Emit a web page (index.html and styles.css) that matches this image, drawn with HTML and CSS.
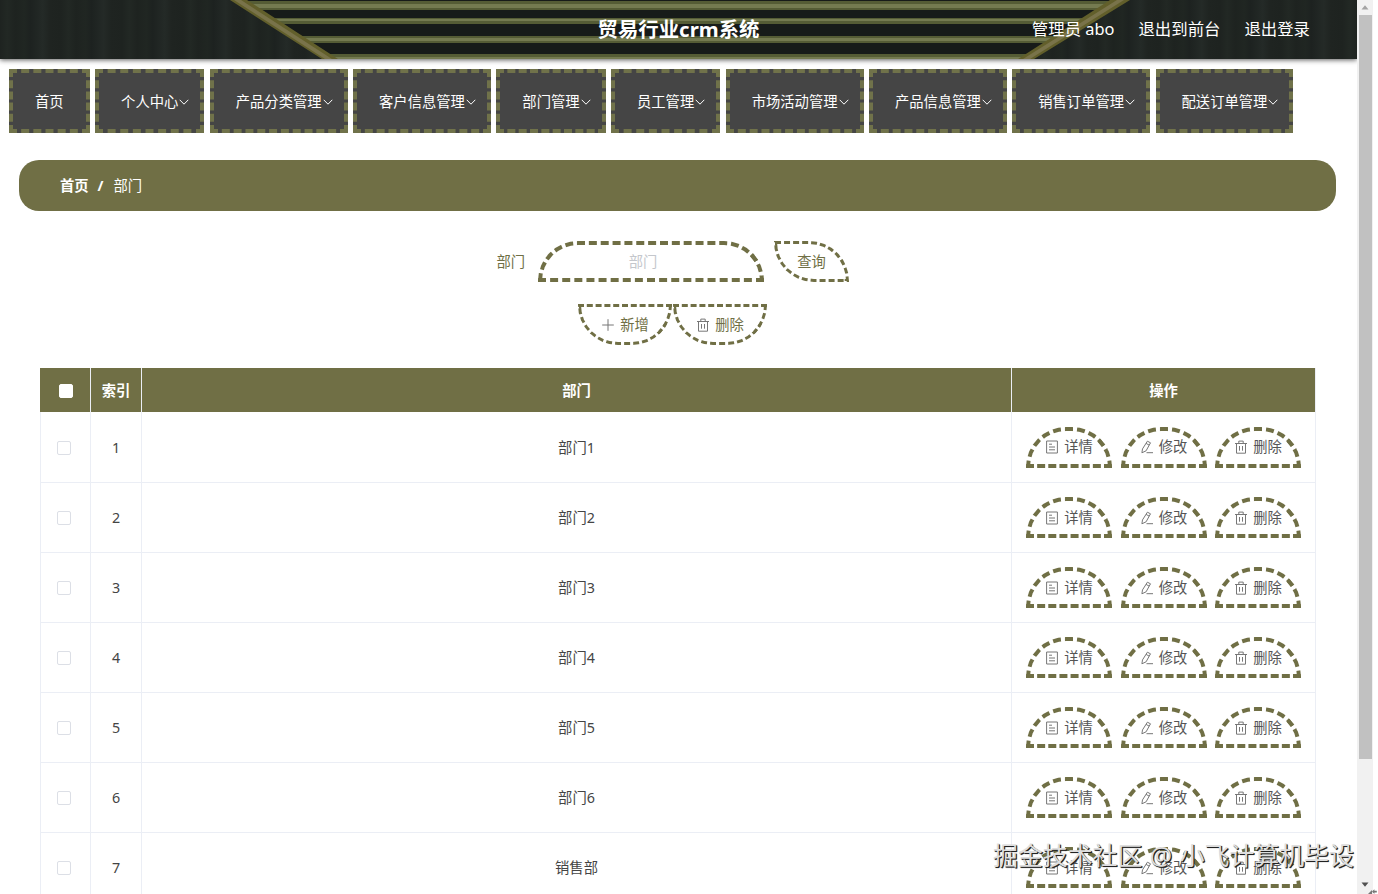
FILE: index.html
```
<!DOCTYPE html>
<html lang="zh-CN">
<head>
<meta charset="utf-8">
<title>贸易行业crm系统</title>
<link rel="stylesheet" href="styles.css">
</head>
<body>
<svg class="defs" width="0" height="0">
  <symbol id="down" viewBox="0 0 10 10"><path d="M.7 2.8 5 7.2 9.3 2.8"/></symbol>
  <symbol id="plus" viewBox="0 0 14 14"><path d="M7 1.2v11.6M1.2 7h11.6"/></symbol>
  <symbol id="trash" viewBox="0 0 14 14"><path d="M1 3.5h12M2.5 3.5v9.7h9V3.5M4.8 3.2V1.1h4.4v2.1M5.5 6v4.7M8.5 6v4.7"/></symbol>
  <symbol id="doc" viewBox="0 0 14 14"><path d="M1.6 1h10.8v12H1.6zM4 4.2h3M4 7h6M4 9.8h6"/></symbol>
  <symbol id="edit" viewBox="0 0 14 14"><path d="M7.4 1.2 10.5 2.8 6.1 10.8 1.9 12.8 2.5 8.9zM6.1 3.4l3 1.7M6.5 12.7H13"/></symbol>
</svg>
<main class="page">
  <header class="topbar">
    <svg class="topbar-art" viewBox="0 0 1357 59" preserveAspectRatio="none">
      <defs>
        <linearGradient id="grain" x1="0" x2="61" y1="0" y2="0" gradientUnits="userSpaceOnUse" spreadMethod="repeat">
          <stop offset="0" stop-color="#1e2320"/><stop offset=".12" stop-color="#222824"/><stop offset=".25" stop-color="#1e2320"/>
          <stop offset=".4" stop-color="#202622"/><stop offset=".5" stop-color="#1d2220"/><stop offset=".7" stop-color="#242a27"/><stop offset=".82" stop-color="#1f2421"/><stop offset="1" stop-color="#1e2320"/>
        </linearGradient>
        <clipPath id="panel"><path d="M238 0H1120L1028 59H330z"/></clipPath>
      </defs>
      <rect width="1357" height="59" fill="url(#grain)"/>
      <g clip-path="url(#panel)">
        <rect width="1357" height="59" fill="#171b19"/>
        <path fill="#555c35" d="M0 1h1357v9H0zM0 18h1357v6H0zM0 36h1357v7H0zM0 54h1357v5H0z"/>
        <path fill="#747a50" d="M0 4h1357v4H0zM0 19h1357v2H0zM0 38h1357v3H0zM0 57h1357v2H0z"/>
      </g>
      <path fill="#625f2b" d="M230 0H247L338 59H322zM1110 0H1130L1034 59H1018z"/>
      <path fill="#79734a" d="M234 0H241L332 59H325zM1117 0H1124L1030 59H1023z"/>
    </svg>
    <span class="side"></span>
    <h1 class="title">贸易行业crm系统</h1>
    <div class="side account"><span>管理员 abo</span><span>退出到前台</span><span>退出登录</span></div>
  </header>

  <nav class="menu">
    <a class="menu-item">首页</a>
    <a class="menu-item">个人中心<svg class="arrow"><use href="#down"/></svg></a>
    <a class="menu-item">产品分类管理<svg class="arrow"><use href="#down"/></svg></a>
    <a class="menu-item">客户信息管理<svg class="arrow"><use href="#down"/></svg></a>
    <a class="menu-item">部门管理<svg class="arrow"><use href="#down"/></svg></a>
    <a class="menu-item">员工管理<svg class="arrow"><use href="#down"/></svg></a>
    <a class="menu-item">市场活动管理<svg class="arrow"><use href="#down"/></svg></a>
    <a class="menu-item">产品信息管理<svg class="arrow"><use href="#down"/></svg></a>
    <a class="menu-item">销售订单管理<svg class="arrow"><use href="#down"/></svg></a>
    <a class="menu-item">配送订单管理<svg class="arrow"><use href="#down"/></svg></a>
  </nav>

  <div class="crumbs"><b>首页</b><b class="slash">/</b><span>部门</span></div>

  <div class="search">
    <label class="label" for="dept">部门</label>
    <input class="field" id="dept" placeholder="部门">
    <button class="query">查询</button>
  </div>
  <div class="tools">
    <button class="tool"><svg class="icon"><use href="#plus"/></svg>新增</button>
    <button class="tool"><svg class="icon"><use href="#trash"/></svg>删除</button>
  </div>

  <table class="grid">
    <colgroup><col class="c-check"><col class="c-index"><col class="c-name"><col class="c-ops"></colgroup>
    <thead><tr><th><i class="box head"></i></th><th>索引</th><th>部门</th><th>操作</th></tr></thead>
    <tbody id="rows"></tbody>
  </table>
</main>
<aside class="scroll">
  <svg class="scroll-arrow" viewBox="0 0 16 15"><path fill="#a3a3a3" d="M4.5 9.5h7L8 5.3z"/></svg>
  <div class="thumb"></div>
  <svg class="scroll-arrow end" viewBox="0 0 16 15"><path fill="#505050" d="M4.5 5.5h7L8 9.7z"/></svg>
</aside>
<svg class="corner" viewBox="0 0 12 10"><path d="M1 10 6 5v5zM6 7l3-3v2h3v2H9v2z"/></svg>
<div class="watermark">掘金技术社区 @ 小飞计算机毕设</div>
<script src="rows.js"></script>
</body>
</html>
```

FILE: styles.css
```
* { box-sizing: border-box; }
body {
  margin: 0;
  width: 1378px;
  height: 894px;
  display: flex;
  overflow: hidden;
  position: relative;
  background: #fff;
  color: #444;
  font: 14.3px/20px "Noto Sans", "Noto Sans CJK SC", sans-serif;
}
.defs { position: absolute; }
symbol { fill: none; }
svg use { fill: none; stroke: currentColor; }
button, input { font: inherit; background: none; }
.page { width: 1357px; height: 894px; overflow: hidden; flex: none; }

.topbar {
  position: relative;
  height: 59px;
  display: grid;
  grid-template-columns: 1fr auto 1fr;
  align-items: center;
  background: #1d211f;
  box-shadow: 0 1px 5px rgba(0, 0, 0, .65);
  color: #fff;
}
.topbar-art { position: absolute; inset: 0; width: 100%; height: 100%; }
.side { position: relative; }
.title { position: relative; margin: 0; font-size: 20.4px; line-height: 59px; font-weight: 700; }
.account { display: flex; justify-content: flex-end; gap: 24px; padding-right: 47px; font-size: 16.4px; white-space: nowrap; line-height: 56px; padding-bottom: 2px; }

.menu { display: flex; gap: 5.5px; padding: 10px 9px 0; }
.menu-item {
  height: 64px;
  padding: 1px 22px 0;
  border: 4px dashed #70724a;
  background: #454545;
  color: #fff;
  display: flex;
  align-items: center;
  white-space: nowrap;
}
.arrow { width: 10px; height: 10px; margin: 0 -11px 0 1px; flex: none; }

.crumbs {
  margin: 27px 21px 0 19px;
  height: 51px;
  padding-left: 41px;
  border-radius: 20px;
  background: #706f45;
  color: #fff;
  display: flex;
  align-items: center;
}
.slash { margin: 0 10px 0 9px; }

.search { display: flex; align-items: center; margin: 30px 0 0 496.5px; height: 41px; color: #706f45; }
.label { width: 41.5px; }
.field {
  width: 226px;
  height: 41px;
  padding: 0 16px 0 0;
  border: 4px dashed #706f45;
  border-radius: 40px 40px 0 0;
  text-align: center;
  outline: none;
}
.field::placeholder { color: #c4c7cc; opacity: 1; }
.query {
  width: 75px;
  height: 41px;
  margin-left: 10px;
  padding: 0;
  border: 3px dashed #706f45;
  border-radius: 0 40px 0 40px;
  color: #706f45;
}
.tools { display: flex; gap: 1px; margin: 22px 0 0 578px; }
.tool {
  width: 94px;
  height: 41px;
  padding: 0;
  border: 3px dashed #706f45;
  border-radius: 0 0 40px 40px;
  color: #706f45;
  display: flex;
  align-items: center;
  justify-content: center;
}
.icon { width: 14px; height: 14px; margin-right: 5px; flex: none; color: #777; }

.grid { width: 1276px; margin: 23px 0 0 40px; border-collapse: separate; border-spacing: 0; table-layout: fixed; text-align: center; }
.c-check { width: 51px; }
.c-index { width: 51px; }
.c-ops { width: 304px; }
.grid th { height: 44px; padding: 2px 0 0; background: #706f45; color: #fff; border-right: 1px solid #ebeef5; }
.grid td { height: 70px; padding: 1px 0 0; border-right: 1px solid #ebeef5; border-bottom: 1px solid #ebeef5; }
.grid td:first-child { border-left: 1px solid #ebeef5; }
.grid tr:first-child td { height: 71px; }
.grid td:last-child { padding-top: 0; }
.box { display: block; width: 14px; height: 14px; border: 1px solid #dcdfe6; border-radius: 2px; background: #fff; margin: 0 auto; position: relative; left: -1.5px; }
.box.head { left: .5px; border-color: #fff; }
.ops { display: flex; justify-content: center; gap: 8.5px; }
.op {
  width: 86px;
  height: 41px;
  padding: 0;
  border: 4px dashed #706f45;
  border-radius: 40px 40px 0 0;
  color: #555;
  display: flex;
  align-items: center;
  justify-content: center;
}

.scroll { width: 16px; height: 894px; background: #f1f1f1; display: flex; flex-direction: column; align-items: center; }
.scroll-arrow { width: 16px; height: 15px; flex: none; }
.end { margin-top: auto; margin-bottom: 2px; }
.thumb { width: 13px; height: 744px; background: #c1c1c1; }
.corner { position: absolute; right: 0; bottom: 0; width: 12px; height: 8px; fill: #777; }
.watermark {
  position: absolute;
  left: 993px;
  top: 837px;
  font-size: 24.9px;
  line-height: 36px;
  word-spacing: 1px;
  white-space: nowrap;
  color: #dedede;
  text-shadow: 1px 1px 0 #222, 1px 1px 1px #444;
}
```

FILE: rows.js
```
const names = ["部门1", "部门2", "部门3", "部门4", "部门5", "部门6", "销售部"];
const actions = [["doc", "详情"], ["edit", "修改"], ["trash", "删除"]];
const buttons = actions.map(([icon, text]) =>
  `<button class="op"><svg class="icon"><use href="#${icon}"/></svg>${text}</button>`).join("");
document.getElementById("rows").innerHTML = names.map((name, i) =>
  `<tr><td><i class="box"></i></td><td>${i + 1}</td><td>${name}</td><td><div class="ops">${buttons}</div></td></tr>`).join("");
```
